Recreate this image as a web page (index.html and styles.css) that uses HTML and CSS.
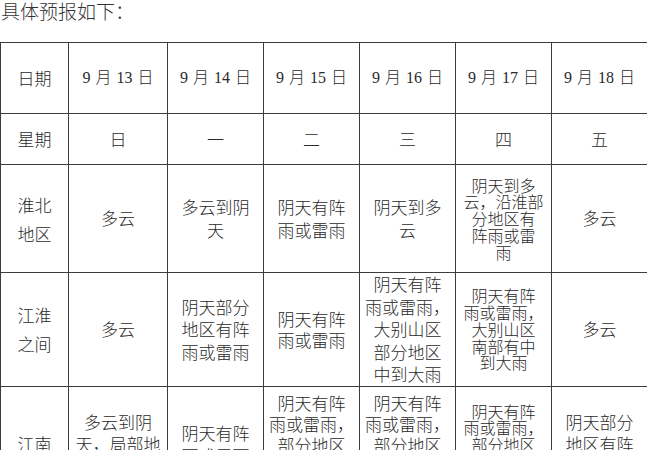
FILE: index.html
```html
<!DOCTYPE html>
<html lang="zh-CN">
<head>
<meta charset="utf-8">
<title>具体预报</title>
<link rel="stylesheet" href="styles.css">
</head>
<body>
<p class="intro">具体预报如下：</p>
<table class="forecast">
  <colgroup>
    <col class="c-head">
    <col class="c-13">
    <col class="c-day">
    <col class="c-day">
    <col class="c-day">
    <col class="c-day">
    <col class="c-day">
  </colgroup>
  <tr class="r-date">
    <td class="label">日期</td>
    <td class="date">9 月 13 日</td>
    <td class="date">9 月 14 日</td>
    <td class="date">9 月 15 日</td>
    <td class="date">9 月 16 日</td>
    <td class="date">9 月 17 日</td>
    <td class="date">9 月 18 日</td>
  </tr>
  <tr class="r-week">
    <td class="label">星期</td>
    <td class="week">日</td>
    <td class="week">一</td>
    <td class="week">二</td>
    <td class="week">三</td>
    <td class="week">四</td>
    <td class="week">五</td>
  </tr>
  <tr class="r-huaibei">
    <td class="label area">淮北<br>地区</td>
    <td>多云</td>
    <td>多云到阴<br>天</td>
    <td>阴天有阵<br>雨或雷雨</td>
    <td>阴天到多<br>云</td>
    <td class="tight">阴天到多<br>云，沿淮部<br>分地区有<br>阵雨或雷<br>雨</td>
    <td>多云</td>
  </tr>
  <tr class="r-jianghuai">
    <td class="label area">江淮<br>之间</td>
    <td>多云</td>
    <td>阴天部分<br>地区有阵<br>雨或雷雨</td>
    <td class="mid">阴天有阵<br>雨或雷雨</td>
    <td>阴天有阵<br>雨或雷雨，<br>大别山区<br>部分地区<br>中到大雨</td>
    <td class="tight">阴天有阵<br>雨或雷雨，<br>大别山区<br>南部有中<br>到大雨</td>
    <td>多云</td>
  </tr>
  <tr class="r-jiangnan">
    <td class="label">江南</td>
    <td>多云到阴<br>天，局部地<br>区有阵雨</td>
    <td>阴天有阵<br>雨或雷雨</td>
    <td class="mid">阴天有阵<br>雨或雷雨，<br>部分地区<br>中到大雨，<br>局部暴雨</td>
    <td class="mid">阴天有阵<br>雨或雷雨，<br>部分地区<br>中到大雨，<br>局部暴雨</td>
    <td class="tight">阴天有阵<br>雨或雷雨，<br>部分地区<br>中到大雨，<br>局部暴雨</td>
    <td>阴天部分<br>地区有阵<br>雨或雷雨</td>
  </tr>
</table>
</body>
</html>
```

FILE: styles.css
```css
html, body {
  margin: 0;
  padding: 0;
  background: #ffffff;
}

body {
  font-family: "Noto Sans CJK SC", "Noto Sans", sans-serif;
  color: #2a2a2a;
}

.intro {
  margin: 0 0 20px 0;
  padding-left: 1px;
  font-size: 19px;
  line-height: 22px;
  font-weight: 300;
  color: #333333;
}

.forecast {
  width: 647px;
  table-layout: fixed;
  border-collapse: collapse;
}

.c-head { width: 68px; }
.c-13 { width: 99px; }
.c-day { width: 96px; }

.forecast td {
  border: 1px solid #3c3c3c;
  padding: 0;
  text-align: center;
  vertical-align: middle;
  font-size: 17px;
  line-height: 22.5px;
  font-weight: 300;
  white-space: nowrap;
}

.forecast td.date {
  font-family: "Liberation Serif", "Noto Sans CJK SC", serif;
  font-size: 16px;
  word-spacing: 1px;
}

.forecast td.label {
  font-size: 17px;
}

.forecast td.area {
  line-height: 29px;
}

.forecast td.tight {
  font-size: 16px;
  line-height: 16.7px;
}

.forecast td.mid {
  line-height: 21px;
}

.r-date td { height: 70px; }
.r-week td { height: 50px; }
.r-huaibei td { height: 107px; }
.r-jianghuai td { height: 110px; }
.r-jiangnan td { height: 116px; }
```
